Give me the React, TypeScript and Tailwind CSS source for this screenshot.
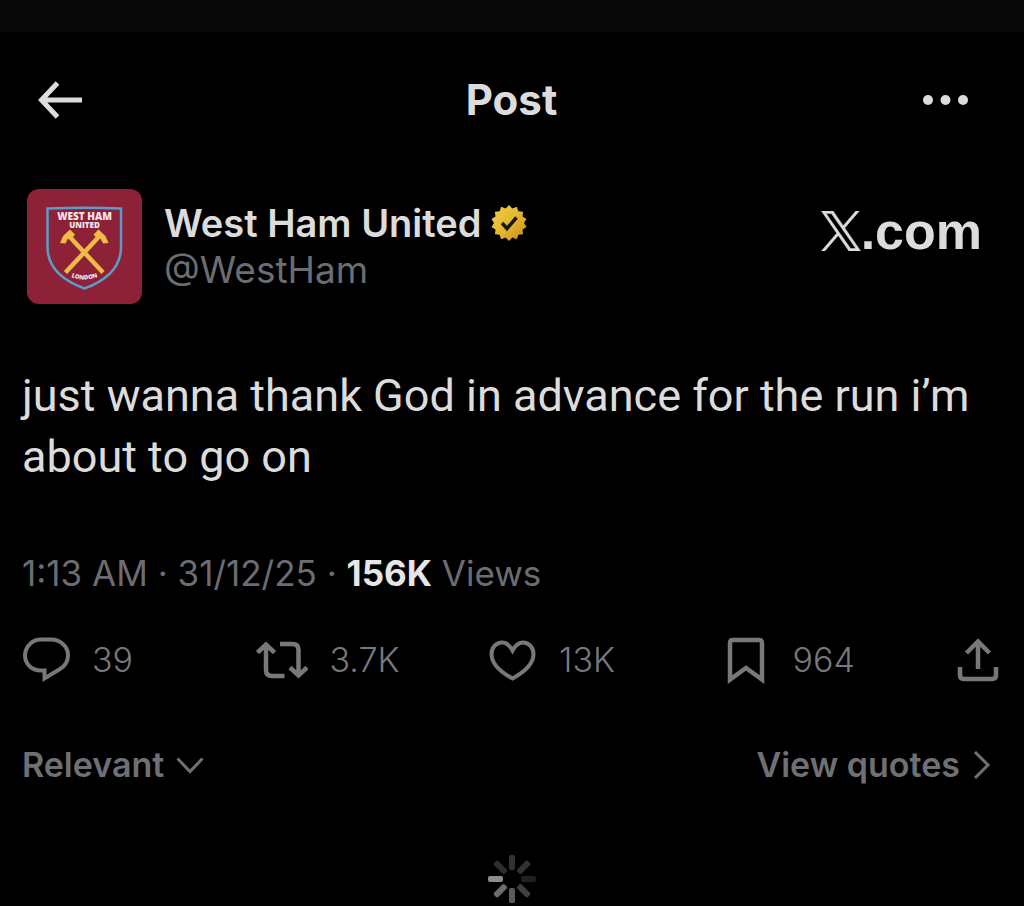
import type { ReactNode } from 'react';

interface Stat {
  label: string;
  value: string;
  icon: ReactNode;
}

// --- アイコン ---
const BackIcon = () => (
  <svg className="w-11 h-10" viewBox="0 0 44 40" fill="none" stroke="currentColor" strokeWidth={5}>
    <path d="M19.5 3 3.5 20l16 17M4 20h40" />
  </svg>
);

const MoreIcon = () => (
  <svg className="w-12 h-10" viewBox="0 0 48 40" fill="currentColor">
    <circle cx="7" cy="20" r="5" />
    <circle cx="24.5" cy="20" r="5" />
    <circle cx="42" cy="20" r="5" />
  </svg>
);

const ReplyIcon = () => (
  <svg className="w-12 h-12 shrink-0" viewBox="0 0 48 48" fill="none" stroke="currentColor" strokeWidth={4}>
    <path d="M19 3.5h10C38.5 3.5 46 10.5 46 19.5c0 6-3 10.500-8 13.500L22.500 42.500v-8H19C10 34.500 3 28 3 19.500S10 3.500 19 3.500z" />
  </svg>
);

const RepostIcon = () => (
  <svg className="w-[52px] h-12 shrink-0" viewBox="0 0 52 48" fill="none" stroke="currentColor" strokeWidth={4.5}>
    <path d="m1.5 16.5 8.500-8 8.500 8M10 10v24q0 6 6 6h12.500M24 8h12.500q6 0 6 6v24M34 31.500l8.500 8 8.500-8" />
  </svg>
);

const HeartIcon = () => (
  <svg className="w-12 h-12 shrink-0" viewBox="0 0 48 48" fill="none" stroke="currentColor" strokeWidth={4}>
    <path d="M23.5 14.5C20.5 9 17 6.500 13 6.500c-6 0-10.500 5-10.500 11.500 0 9.500 9 18 21 24.500 12-6.500 21-15 21-24.500 0-6.500-4.500-11.500-10.500-11.500-4 0-7.500 2.500-10.500 8z" />
  </svg>
);

const BookmarkIcon = () => (
  <svg className="w-12 h-12 shrink-0" viewBox="0 0 48 48" fill="none" stroke="currentColor" strokeWidth={4.5}>
    <path d="M7 43.500V7q0-3 3-3h26q3 0 3 3v36.500L23 32z" />
  </svg>
);

const ShareIcon = () => (
  <svg className="w-11 h-12" viewBox="0 0 44 48" fill="none" stroke="currentColor" strokeWidth={4.5}>
    <path d="M22 33V5M10.500 17 22 5.500 33.500 17M4 31v8q0 4 4 4h28q4 0 4-4v-8" />
  </svg>
);

const ChevronDownIcon = () => (
  <svg className="w-7 h-5" viewBox="0 0 28 20" fill="none" stroke="currentColor" strokeWidth={3}>
    <path d="m1.5 3.500 12.500 13 12.500-13" />
  </svg>
);

const ChevronRightIcon = () => (
  <svg className="w-5 h-7" viewBox="0 0 20 28" fill="none" stroke="currentColor" strokeWidth={3}>
    <path d="m3 1 13 13L3 27" />
  </svg>
);

const XLogo = () => (
  <svg className="w-10 h-10" viewBox="0 0 24 24" fill="currentColor" stroke="currentColor" strokeWidth={0.3}>
    <path d="M14.234 10.162 22.977 0h-2.072l-7.591 8.824L7.251 0H.258l9.168 13.343L.258 24H2.33l8.016-9.318L16.749 24h6.993zm-2.837 3.299-.929-1.329L3.076 1.56h3.182l5.965 8.532.929 1.329 7.754 11.09h-3.182z" />
  </svg>
);

// 14 points, alternating outer and inner radius
const badgePoints = Array.from({ length: 28 }, (_, i) => {
  const r = i % 2 === 0 ? 18 : 15;
  const a = (i * Math.PI) / 14 - Math.PI / 2;
  return `${(19 + r * Math.cos(a)).toFixed(2)},${(19 + r * Math.sin(a)).toFixed(2)}`;
}).join(' ');

const VerifiedBadge = () => (
  <svg className="w-[38px] h-[38px]" viewBox="0 0 38 38" role="img" aria-label="Verified">
    <defs>
      <linearGradient id="gold" x1="0" y1="0" x2="1" y2="1">
        <stop offset="0" stopColor="#f0cf4c" />
        <stop offset="0.55" stopColor="#e3b52c" />
        <stop offset="1" stopColor="#c98a1c" />
      </linearGradient>
    </defs>
    <polygon points={badgePoints} fill="url(#gold)" />
    <path d="m12 19 5 5.500 9.500-11" fill="none" stroke="#1c1605" strokeWidth={3.5} />
  </svg>
);

const Crest = () => (
  <svg className="w-[115px] h-[115px] shrink-0 rounded-xl bg-[#8c2138]" viewBox="0 0 115 115" role="img" aria-label="West Ham United crest">
    <path
      d="M20.5 19.500Q57.500 18 94 19.500V58C94 80 78 92 57.500 99.500 37 92 20.500 80 20.500 58z"
      fill="none"
      stroke="#5b9dc8"
      strokeWidth={2.5}
    />
    <g fill="none" stroke="#eebb45" strokeWidth={4.5}>
      <path d="m41 46 35 37.500" />
      <path d="M73.5 46 38.500 83.500" />
    </g>
    <path d="m33 54 3-7 7-6.500 5 5-4 5-3-1-2.500 5z" fill="#eebb45" />
    <path d="m81.500 54-3-7-7-6.500-5 5 4 5 3-1 2.500 5z" fill="#eebb45" />
    <g fill="#f3e6ea" fontFamily="'Open Sans', sans-serif" fontWeight={800} textAnchor="middle">
      <text x="57.500" y="31" fontSize="10">WEST HAM</text>
      <text x="57.500" y="38.500" fontSize="8">UNITED</text>
      <path id="london" d="M40 86Q57.500 95 75 86" fill="none" />
      <text fontSize="6">
        <textPath href="#london" startOffset="50%">LONDON</textPath>
      </text>
    </g>
  </svg>
);

const spokes = [0.22, 0.22, 0.14, 0.28, 0.4, 0.48, 0.62, 0.2];

const Spinner = () => (
  <svg className="w-[50px] h-[50px]" viewBox="0 0 50 50" role="img" aria-label="Loading">
    {spokes.map((opacity, i) => (
      <rect
        key={i}
        x="22"
        y="1"
        width="6"
        height="15"
        rx="2"
        fill="#e4e4e8"
        opacity={opacity}
        transform={`rotate(${i * 45} 25 25)`}
      />
    ))}
  </svg>
);

const stats: Stat[] = [
  { label: 'Replies', value: '39', icon: <ReplyIcon /> },
  { label: 'Reposts', value: '3.7K', icon: <RepostIcon /> },
  { label: 'Likes', value: '13K', icon: <HeartIcon /> },
  { label: 'Bookmarks', value: '964', icon: <BookmarkIcon /> },
];

export default function App() {
  return (
    <div className="min-h-screen bg-black text-[#dcdcdc] font-['Inter','Liberation_Sans',sans-serif] overflow-hidden">
      <div className="h-8 bg-[#080808]" />

      {/* Header */}
      <header className="grid grid-cols-[1fr_auto_1fr] items-center h-[135px] pl-[38px] pr-[55px]">
        <button aria-label="Back" className="justify-self-start">
          <BackIcon />
        </button>
        <h1 className="text-[42px] leading-[48px] font-bold pl-4">Post</h1>
        <button aria-label="More" className="justify-self-end">
          <MoreIcon />
        </button>
      </header>

      <main>
        <article className="pl-[22px] pr-6">
          {/* Author */}
          <div className="flex items-center pt-[22px] pl-[5px] pr-[18px]">
            <Crest />
            <div className="flex-1 pl-[22px] pb-[2px]">
              <div className="flex items-center gap-2">
                <span className="text-[38px] leading-[48px] font-semibold">West Ham United</span>
                <VerifiedBadge />
              </div>
              <a href="#profile" className="block text-[37px] leading-[46px] text-[#6b6d72]">
                @WestHam
              </a>
            </div>
            <div className="flex items-center pb-8 font-['Liberation_Sans',sans-serif]">
              <XLogo />
              <span className="text-[52px] leading-[52px] font-bold">.com</span>
            </div>
          </div>

          <p className="pt-[61px] text-[45px] leading-[61px] font-['Roboto','Liberation_Sans',sans-serif]">
            just wanna thank God in advance for the run i’m about to go on
          </p>

          <p className="pt-[62px] text-[35px] leading-[48px] text-[#6b6d72]">
            1:13 AM · 31/12/25 · <strong className="font-bold text-[#e6e6e6]">156K</strong> Views
          </p>

          {/* Actions */}
          <div className="grid grid-cols-[1fr_1fr_1fr_1fr_auto] items-center pt-[39px] text-[#77787c]">
            {stats.map((stat) => (
              <button key={stat.label} aria-label={stat.label} className="flex items-center gap-[22px]">
                {stat.icon}
                <span className="text-[34px] leading-[48px] font-light">{stat.value}</span>
              </button>
            ))}
            <button aria-label="Share">
              <ShareIcon />
            </button>
          </div>
        </article>

        {/* Replies */}
        <div className="flex items-center justify-between pt-[57px] pl-[22px] pr-8 text-[34px] leading-[48px] font-semibold text-[#6f7075]">
          <button className="flex items-center gap-3">
            Relevant
            <ChevronDownIcon />
          </button>
          <a href="#quotes" className="flex items-center gap-3">
            View quotes
            <ChevronRightIcon />
          </a>
        </div>

        <div className="flex justify-center pt-[65px]">
          <Spinner />
        </div>
      </main>
    </div>
  );
}
